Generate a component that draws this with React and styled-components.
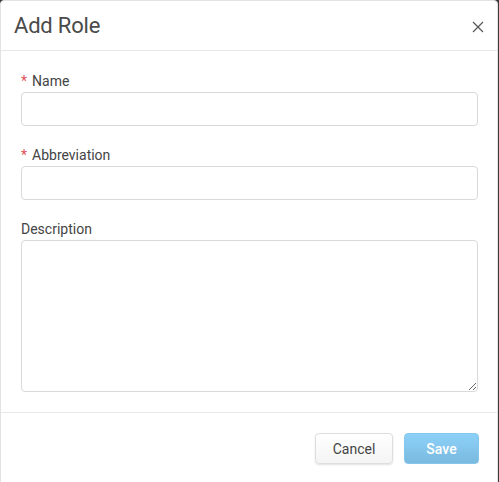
import React, { useState } from "react";
import styled, { createGlobalStyle } from "styled-components";

const GlobalStyle = createGlobalStyle`
  html, body {
    margin: 0;
    padding: 0;
    background: #3a3a3a;
  }
  body {
    font-family: Roboto, "Liberation Sans", sans-serif;
    color: #444;
  }
`;

const Modal = styled.div`
  width: 498px;
  height: 490px;
  background: #fff;
  border: 1px solid #e3e3e3;
  border-radius: 4px;
  box-sizing: border-box;
  display: flex;
  flex-direction: column;
  overflow: hidden;
`;

const Header = styled.div`
  height: 49px;
  padding: 0 12px 0 13px;
  display: flex;
  align-items: center;
  justify-content: space-between;
  border-bottom: 1px solid #e8e8e8;
  flex-shrink: 0;
`;

const Title = styled.h4`
  margin: 0;
  font-size: 22px;
  font-weight: 400;
  color: #4a4a4a;
  letter-spacing: -0.2px;
`;

const CloseButton = styled.button`
  border: none;
  background: none;
  padding: 0;
  width: 14px;
  height: 14px;
  display: flex;
  align-items: center;
  justify-content: center;
  cursor: pointer;
  margin-top: 3px;
`;

const Body = styled.div`
  padding: 20px 19px 20px 20px;
  display: flex;
  flex-direction: column;
  gap: 19px;
  border-bottom: 1px solid #e8e8e8;
`;

const Group = styled.div`
  display: flex;
  flex-direction: column;
  gap: 1px;
`;

const Label = styled.label`
  font-size: 14px;
  line-height: 20px;
  color: #444;
`;

const Star = styled.span`
  color: #e5535a;
  margin-right: 5px;
  font-size: 14px;
`;

const Input = styled.input`
  box-sizing: border-box;
  height: 34px;
  width: 100%;
  border: 1px solid #d9d9d9;
  border-radius: 4px;
  font-family: inherit;
  font-size: 14px;
  padding: 6px 10px;
  outline: none;
`;

const TextArea = styled.textarea`
  box-sizing: border-box;
  height: 152px;
  width: 100%;
  border: 1px solid #d9d9d9;
  border-radius: 4px;
  font-family: inherit;
  font-size: 14px;
  padding: 6px 10px;
  outline: none;
  resize: vertical;
  display: block;
`;

const Footer = styled.div`
  padding: 20px 18px 0 0;
  display: flex;
  justify-content: flex-end;
  gap: 11px;
`;

const Button = styled.button`
  height: 31px;
  width: ${(p) => p.w}px;
  border-radius: 4px;
  font-family: inherit;
  font-size: 14px;
  cursor: pointer;
  ${(p) =>
    p.primary
      ? `
    border: 1px solid #84c6ec;
    color: #fff;
    font-weight: 500;
    background: linear-gradient(to bottom, #8dd1f8, #7ab9e0);
  `
      : `
    border: 1px solid #dedede;
    color: #444;
    background: linear-gradient(to bottom, #ffffff, #f4f4f4);
    box-shadow: 0 1px 2px rgba(0, 0, 0, 0.12);
  `}
`;

const App = () => {
  const [name, setName] = useState("");
  const [abbr, setAbbr] = useState("");
  const [desc, setDesc] = useState("");

  return (
    <>
      <GlobalStyle />
      <Modal>
        <Header>
          <Title>Add Role</Title>
          <CloseButton aria-label="Close">
            <svg width="12" height="12" viewBox="0 0 12 12">
              <path d="M1 1L11 11M11 1L1 11" stroke="#555" strokeWidth="1.2" />
            </svg>
          </CloseButton>
        </Header>
        <Body>
          <Group>
            <Label>
              <Star>*</Star>Name
            </Label>
            <Input value={name} onChange={(e) => setName(e.target.value)} />
          </Group>
          <Group>
            <Label>
              <Star>*</Star>Abbreviation
            </Label>
            <Input value={abbr} onChange={(e) => setAbbr(e.target.value)} />
          </Group>
          <Group>
            <Label>Description</Label>
            <TextArea value={desc} onChange={(e) => setDesc(e.target.value)} />
          </Group>
        </Body>
        <Footer>
          <Button w={78}>Cancel</Button>
          <Button w={75} primary>
            Save
          </Button>
        </Footer>
      </Modal>
    </>
  );
};

export default App;
